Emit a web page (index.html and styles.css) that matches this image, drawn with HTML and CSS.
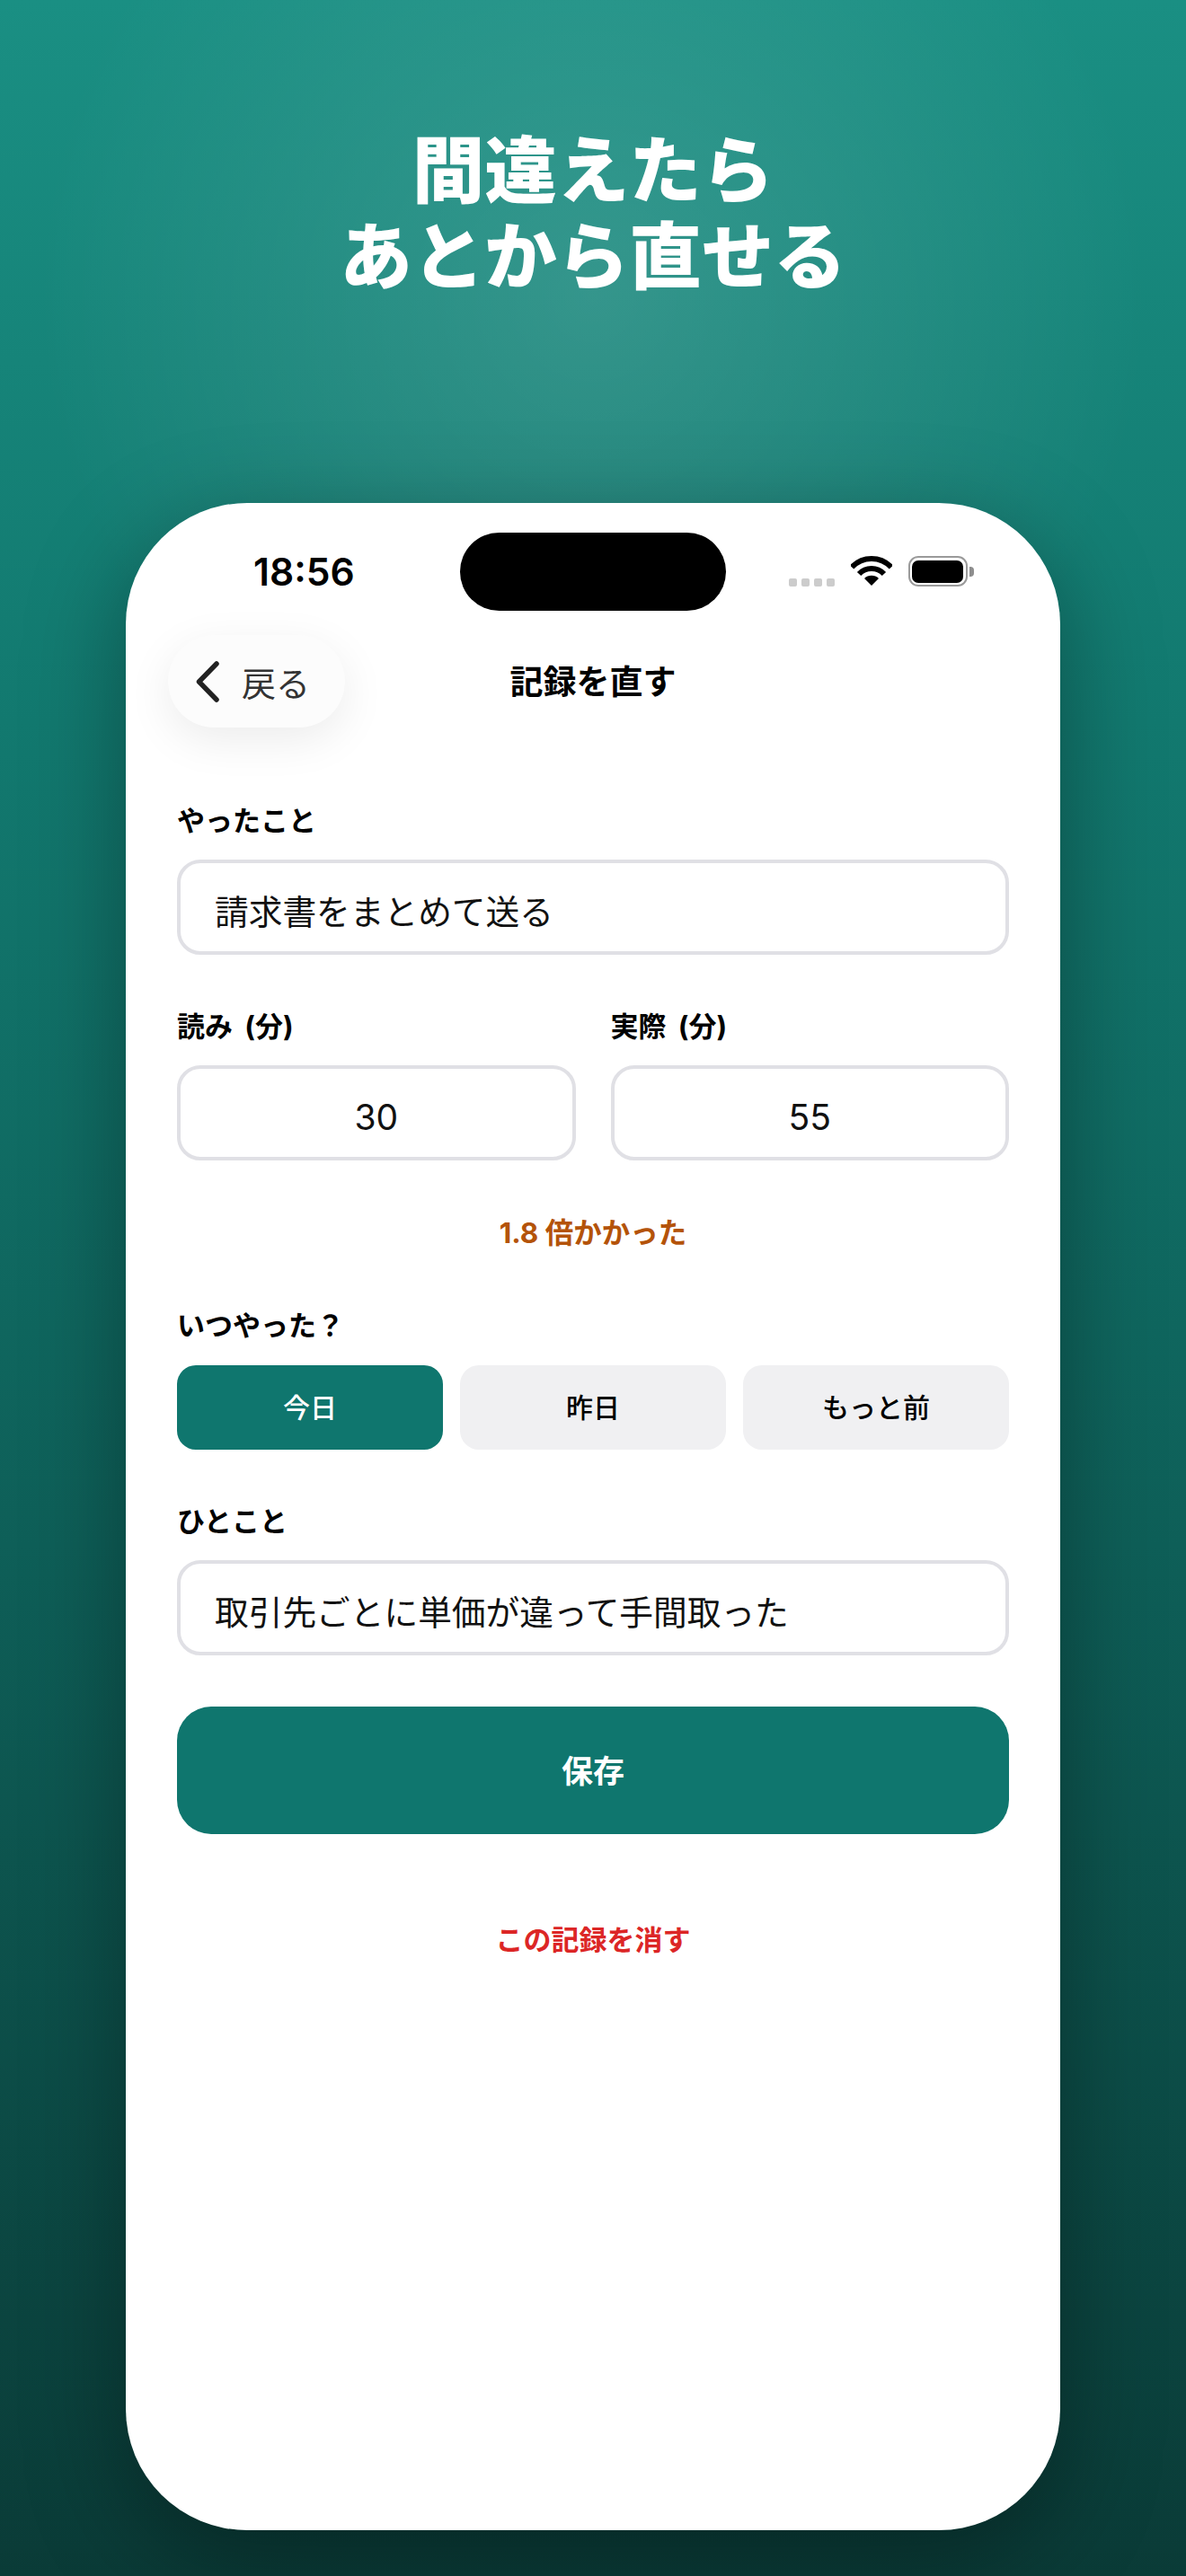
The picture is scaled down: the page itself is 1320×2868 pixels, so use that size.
FILE: index.html
```html
<!DOCTYPE html>
<html lang="ja">
<head>
  <meta charset="UTF-8">
  <meta name="viewport" content="width=device-width, initial-scale=1.0">
  <title>記録を直す</title>
  <link rel="stylesheet" href="styles.css">
</head>
<body>
  <h1 class="headline">間違えたら<br>あとから直せる</h1>

  <div class="phone">
    <div class="status-bar">
      <div class="time">18:56</div>
      <div class="island"></div>
      <div class="status-icons">
        <div class="dots"><span></span><span></span><span></span><span></span></div>
        <svg class="wifi" viewBox="0 0 46 33" width="46" height="33">
          <path d="M1.1 12.5A30 30 0 0 1 44.9 12.5" fill="none" stroke="#000" stroke-width="6"/>
          <path d="M9.1 20A19 19 0 0 1 36.9 20" fill="none" stroke="#000" stroke-width="6"/>
          <path d="M23 33L15 25A11.3 11.3 0 0 1 31 25Z" fill="#000"/>
        </svg>
        <div class="battery"><div class="battery-fill"></div></div>
        <div class="battery-cap"></div>
      </div>
    </div>

    <div class="nav">
      <div class="back">
        <svg class="chevron" viewBox="0 0 30 48" width="30" height="48">
          <path d="M25 4L5.5 24L25 44" fill="none" stroke="#222" stroke-width="5.5" stroke-linecap="round" stroke-linejoin="round"/>
        </svg>
        <span>戻る</span>
      </div>
      <div class="nav-title">記録を直す</div>
    </div>

    <form class="form">
      <div class="label">やったこと</div>
      <div class="field">請求書をまとめて送る</div>

      <div class="minutes">
        <div>
          <div class="label label-unit">読み (分)</div>
          <div class="field field-num">30</div>
        </div>
        <div>
          <div class="label label-unit">実際 (分)</div>
          <div class="field field-num">55</div>
        </div>
      </div>

      <div class="ratio">1.8 倍かかった</div>

      <div class="label when-label">いつやった？</div>
      <div class="segments">
        <div class="segment active">今日</div>
        <div class="segment">昨日</div>
        <div class="segment">もっと前</div>
      </div>

      <div class="label note-label">ひとこと</div>
      <div class="field">取引先ごとに単価が違って手間取った</div>

      <button type="button" class="save">保存</button>
      <div class="delete">この記録を消す</div>
    </form>
  </div>
</body>
</html>
```

FILE: styles.css
```css
* { box-sizing: border-box; }
html, body { margin: 0; padding: 0; }
body {
  width: 1320px;
  height: 2868px;
  overflow: hidden;
  font-family: Inter, "Noto Sans CJK JP", sans-serif;
  color: #000;
  background:
    radial-gradient(circle 620px at 660px 330px, rgba(255,255,255,0.13), rgba(255,255,255,0)),
    linear-gradient(180deg, #1a8f83 0%, #12796f 28%, #0e5f58 60%, #0a3b37 100%);
}

.headline {
  margin: 0;
  padding-top: 142px;
  height: 560px;
  font-size: 80.5px;
  line-height: 96px;
  font-weight: 900;
  color: #fff;
  text-align: center;
}

.phone {
  width: 1040px;
  height: 2257px;
  margin: 0 auto;
  background: #fff;
  border-radius: 135px;
  box-shadow: 0 30px 110px rgba(0,0,0,0.35);
}

/* status bar */
.status-bar {
  display: grid;
  grid-template-columns: 372px 296px 372px;
  padding-top: 33px;
}
.time {
  padding-left: 142px;
  font-size: 42.5px;
  line-height: 87px;
  font-weight: 600;
}
.island { height: 87px; background: #000; border-radius: 44px; }
.status-icons {
  display: flex;
  align-items: flex-start;
  padding: 26px 0 0 70px;
}
.dots { display: flex; gap: 5.5px; margin-top: 25px; }
.dots span { width: 8.5px; height: 8.5px; border-radius: 2px; background: #ccc; }
.wifi { margin-left: 18px; }
.battery {
  width: 66px;
  height: 34px;
  margin-left: 18px;
  padding: 2.5px;
  border: 2.5px solid #9a9a9a;
  border-radius: 11px;
}
.battery-fill { height: 100%; background: #000; border-radius: 7px; }
.battery-cap {
  width: 5px;
  height: 11px;
  margin: 12px 0 0 2px;
  background: #8e8e8e;
  border-radius: 0 4px 4px 0;
}

/* nav */
.nav {
  display: grid;
  grid-template-columns: 1fr auto 1fr;
  align-items: center;
  margin-top: 27px;
  padding-left: 47px;
}
.back {
  display: flex;
  align-items: center;
  justify-self: start;
  width: 197px;
  height: 103px;
  padding-left: 29px;
  background: #fcfcfc;
  border-radius: 52px;
  box-shadow: 0 14px 50px rgba(0,0,0,0.08);
  font-size: 38px;
  color: #333;
}
.chevron { margin-right: 23px; }
.nav-title {
  grid-column: 2;
  margin: 2px 0 0 -47px;
  font-size: 37px;
  line-height: 44px;
  font-weight: 700;
}

/* form */
.form { padding: 84px 57px 0; }
.label { font-size: 31px; line-height: 40px; font-weight: 700; }
.label-unit { word-spacing: 6px; }
.field {
  height: 106px;
  margin-top: 23px;
  padding: 10px 0 0 38px;
  border: 4px solid #e0e0e5;
  border-radius: 26px;
  font-size: 37.7px;
  line-height: 88px;
  color: #111;
}
.field-num { padding-left: 0; font-size: 39px; text-align: center; }
.minutes {
  display: grid;
  grid-template-columns: 1fr 1fr;
  column-gap: 39px;
  margin-top: 60px;
}
.ratio {
  margin-top: 61px;
  font-size: 31.5px;
  line-height: 40px;
  font-weight: 700;
  color: #b45309;
  text-align: center;
}
.when-label { margin-top: 63px; }
.segments {
  display: grid;
  grid-template-columns: repeat(3, 1fr);
  column-gap: 19px;
  margin-top: 24px;
}
.segment {
  height: 94px;
  background: #f0f0f2;
  border-radius: 21px;
  font-size: 30px;
  line-height: 94px;
  font-weight: 500;
  text-align: center;
}
.segment.active { background: #0f766e; color: #fff; }
.note-label { margin-top: 60px; }
.save {
  display: block;
  width: 100%;
  height: 142px;
  margin-top: 57px;
  padding-bottom: 4px;
  background: #0f766e;
  border: none;
  border-radius: 38px;
  font-family: inherit;
  font-size: 35px;
  font-weight: 700;
  color: #fff;
}
.delete {
  margin-top: 98px;
  font-size: 31px;
  line-height: 40px;
  font-weight: 700;
  color: #dc2626;
  text-align: center;
}
```
